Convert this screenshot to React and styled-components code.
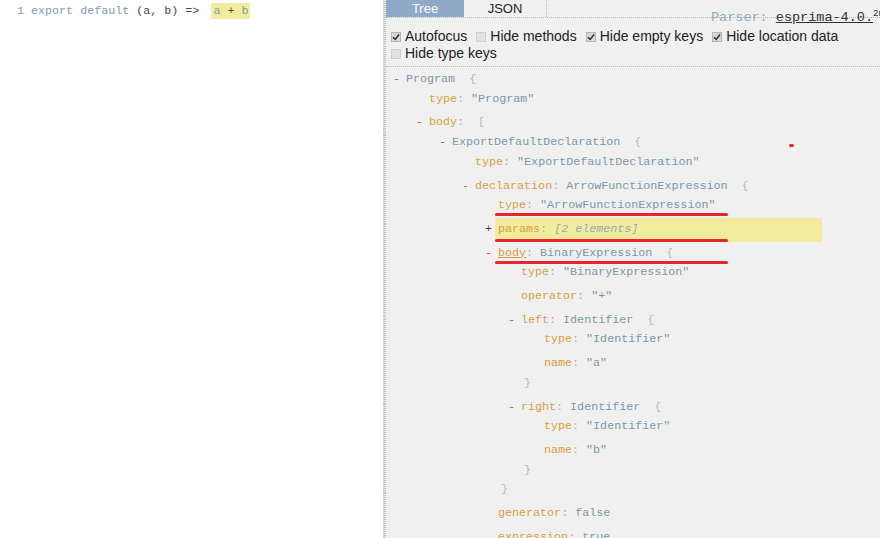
import React from "react"
import styled, { createGlobalStyle } from "styled-components"

const GlobalStyle = createGlobalStyle`
  html, body {
    margin: 0;
    padding: 0;
    background: #fff;
  }
  body {
    font-family: "Liberation Sans", Arial, sans-serif;
  }
`

const mono = `"Liberation Mono", "Courier New", monospace`

const Page = styled.div`
  display: flex;
  width: 880px;
  height: 538px;
  overflow: hidden;
`

const Editor = styled.div`
  width: 383px;
  flex: none;
  background: #fff;
  padding: 3px 0 0 17px;
  box-sizing: border-box;
  font-family: ${mono};
  font-size: 11.7px;
  line-height: 16px;
  white-space: pre;
`

const Gutter = styled.span`
  color: #8b9ea8;
`

const Keyword = styled.span`
  color: #7c9cae;
`

const Plain = styled.span`
  color: #4a4a4a;
`

const Mark = styled.span`
  background: #f3ec9c;
  margin-left: -2px;
  padding: 0 2px;
  display: inline-block;
`

const Panel = styled.div`
  flex: 1;
  position: relative;
  overflow: hidden;
  background: #f0f0f0;
  border-left: 3px solid #d4d4d4;
  border-image: repeating-linear-gradient(#c4c4c4 0 1px, #e8e8e8 1px 2px) 3;
`

const TabBar = styled.div`
  display: flex;
  height: 17px;
  border-bottom: 1px dotted #b8b8b8;
`

const Tab = styled.div`
  flex: none;
  width: ${p => p.$width}px;
  text-align: center;
  font-size: 13px;
  line-height: 17px;
  color: ${p => (p.$active ? "#fff" : "#222")};
  background: ${p => (p.$active ? "#8eaac6" : "transparent")};
  border-right: ${p => (p.$active ? "none" : "1px dotted #b8b8b8")};
`

const Parser = styled.div`
  flex: none;
  margin: 6px 0 0 164px;
  font-family: ${mono};
  font-size: 13.5px;
  line-height: 16px;
  white-space: nowrap;
  color: #8fa9ba;
`

const ParserName = styled.span`
  color: #333;
  text-decoration: underline;
`

const Timing = styled.span`
  font-size: 9px;
  vertical-align: 5px;
  color: #333;
`

const Options = styled.div`
  display: flex;
  flex-wrap: wrap;
  column-gap: 9px;
  padding: 10px 0 4px 5px;
  border-bottom: 1px dotted #b8b8b8;
  font-size: 14px;
  line-height: 17px;
  color: #222;
`

const Option = styled.label`
  display: inline-flex;
  align-items: center;
  gap: 4px;
`

const Box = styled.span`
  display: inline-flex;
  align-items: center;
  justify-content: center;
  width: 10px;
  height: 10px;
  box-sizing: border-box;
  border: 1px solid ${p => (p.$checked ? "#b4b4b4" : "#cfcfcf")};
  background: ${p => (p.$checked ? "#d8d8d8" : "#e2e2e2")};
`

const Tree = styled.ul`
  margin: 0;
  padding: 1px 0 0 20px;
  list-style: none;
  font-family: ${mono};
  font-size: 11.7px;
`

const Children = styled.ul`
  margin: 0;
  padding: 0 0 0 23px;
  list-style: none;
`

const Entry = styled.li`
  padding: 4px 0;
  ${p =>
    p.$mark &&
    `
    background: #f3ec9c;
    margin-left: -3px;
    padding-left: 3px;
    width: 324px;
  `}
`

const Line = styled.div`
  position: relative;
  line-height: 15.7px;
  white-space: pre;
`

const Toggle = styled.span`
  display: inline-block;
  width: 13px;
  margin-left: -13px;
  color: ${p => (p.$open ? "#e0452f" : "#444")};
`

const Key = styled.span`
  color: #d69e3e;
  text-decoration: ${p => (p.$hover ? "underline" : "none")};
`

const Punct = styled.span`
  color: #9fb0ba;
`

const Value = styled.span`
  color: #7898ab;
`

const Brace = styled.span`
  color: #a9bac4;
`

const Collapsed = styled.span`
  color: #94aab8;
  font-style: italic;
`

const Closing = styled.div`
  padding-left: 3px;
  line-height: 15.7px;
  color: #a9bac4;
`

const Scribble = styled.span`
  position: absolute;
  left: -3px;
  top: ${p => p.$top}px;
  width: 233px;
  height: 3px;
  border-radius: 2px;
  background: #e8262b;
`

const Dot = styled.span`
  position: absolute;
  left: 403px;
  top: 144px;
  width: 5px;
  height: 3px;
  border-radius: 2px;
  background: #e8262b;
`

const ast = {
  type: "Program",
  children: [
    { name: "type", value: '"Program"' },
    {
      name: "body",
      brace: "[",
      children: [
        {
          type: "ExportDefaultDeclaration",
          children: [
            { name: "type", value: '"ExportDefaultDeclaration"' },
            {
              name: "declaration",
              type: "ArrowFunctionExpression",
              children: [
                { name: "type", value: '"ArrowFunctionExpression"', scribble: 15 },
                { name: "params", collapsed: "2 elements", mark: true, scribble: 17 },
                {
                  name: "body",
                  type: "BinaryExpression",
                  hover: true,
                  scribble: 15,
                  children: [
                    { name: "type", value: '"BinaryExpression"' },
                    { name: "operator", value: '"+"' },
                    {
                      name: "left",
                      type: "Identifier",
                      children: [
                        { name: "type", value: '"Identifier"' },
                        { name: "name", value: '"a"' },
                      ],
                    },
                    {
                      name: "right",
                      type: "Identifier",
                      children: [
                        { name: "type", value: '"Identifier"' },
                        { name: "name", value: '"b"' },
                      ],
                    },
                  ],
                },
                { name: "generator", value: "false" },
                { name: "expression", value: "true" },
                { name: "async", value: "false" },
              ],
            },
          ],
        },
      ],
    },
  ],
}

const options = [
  { label: "Autofocus", checked: true },
  { label: "Hide methods", checked: false },
  { label: "Hide empty keys", checked: true },
  { label: "Hide location data", checked: true },
  { label: "Hide type keys", checked: false },
]

const Check = () => (
  <svg width="8" height="8" viewBox="0 0 8 8">
    <path d="M1 4.2 L3.2 6.4 L7 1.4" fill="none" stroke="#333" strokeWidth="1.6" />
  </svg>
)

const Node = ({ node }) => {
  const { name, type, value, children, collapsed, brace = "{" } = node
  const open = !!children
  return (
    <Entry $mark={node.mark}>
      <Line>
        {(open || collapsed) && <Toggle $open={open}>{open ? "-" : "+"}</Toggle>}
        {name && <Key $hover={node.hover}>{name}</Key>}
        {name && <Punct>{type || value || collapsed ? ": " : ":"}</Punct>}
        {type && <Value>{type}</Value>}
        {value && <Value>{value}</Value>}
        {collapsed && <Collapsed>[{collapsed}]</Collapsed>}
        {open && <Brace>{"  " + brace}</Brace>}
        {node.scribble != null && <Scribble $top={node.scribble} />}
      </Line>
      {open && (
        <>
          <Children>
            {children.map((child, i) => (
              <Node key={i} node={child} />
            ))}
          </Children>
          <Closing>{brace === "[" ? "]" : "}"}</Closing>
        </>
      )}
    </Entry>
  )
}

export default function App() {
  return (
    <>
      <GlobalStyle />
      <Page>
        <Editor>
          <Gutter>1 </Gutter>
          <Keyword>export default </Keyword>
          <Plain>(a, b) =&gt;  </Plain>
          <Mark>
            <Keyword>a </Keyword>
            <Plain>+</Plain>
            <Keyword> b</Keyword>
          </Mark>
        </Editor>
        <Panel>
          <TabBar>
            <Tab $active $width={78}>Tree</Tab>
            <Tab $width={82}>JSON</Tab>
            <Parser>
              Parser: <ParserName>esprima-4.0.</ParserName>
              <Timing>2ms</Timing>
            </Parser>
          </TabBar>
          <Options>
            {options.map(o => (
              <Option key={o.label}>
                <Box $checked={o.checked}>{o.checked && <Check />}</Box>
                {o.label}
              </Option>
            ))}
          </Options>
          <Tree>
            <Node node={ast} />
          </Tree>
          <Dot />
        </Panel>
      </Page>
    </>
  )
}
